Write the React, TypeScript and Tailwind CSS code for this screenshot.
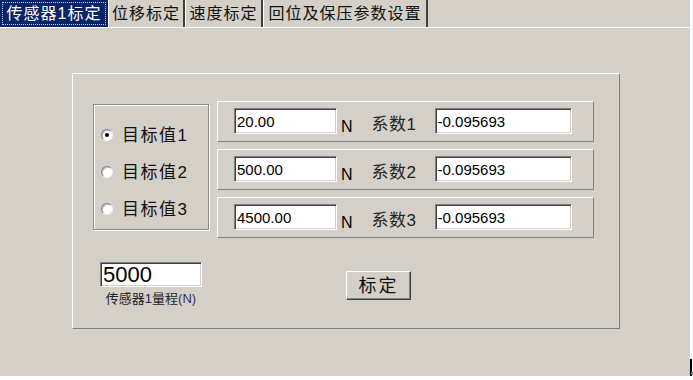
import React from "react";

const cjk = { fontFamily: '"Liberation Sans", "Noto Sans CJK SC", sans-serif' };

function Tab({ label, w, active }: { label: string; w: number; active?: boolean }) {
  if (active) {
    return (
      <div
        className="h-[27px] bg-[#0a246a] flex items-center p-[2px] shrink-0"
        style={{ width: w }}
      >
        <div className="w-full h-full border border-dotted border-[#c8d0e8] flex items-center justify-center text-white text-[16px] tracking-[1px] leading-none">
          {label}
        </div>
      </div>
    );
  }
  return (
    <div
      className="h-[27px] flex items-center justify-center border-l border-l-white border-r-2 border-r-[#404040] text-[16px] tracking-[1px] leading-none text-[#111] shrink-0"
      style={{ width: w }}
    >
      {label}
    </div>
  );
}

function Field({ value, w, h = 26, size = 15 }: { value: string; w: number; h?: number; size?: number }) {
  return (
    <div
      className="bg-white border border-t-[#808080] border-l-[#808080] border-b-white border-r-white shadow-[inset_1px_1px_0_#404040,inset_-1px_-1px_0_#d4d0c8] flex items-center pl-[2px] text-black leading-none shrink-0"
      style={{ width: w, height: h, fontSize: size, fontFamily: '"Liberation Sans", Arial, sans-serif' }}
    >
      {value}
    </div>
  );
}

function Radio({ label, checked }: { label: string; checked?: boolean }) {
  return (
    <div className="flex items-center h-[20px]">
      <div className="w-[12px] h-[12px] rounded-full bg-white border border-t-[#808080] border-l-[#808080] border-b-[#f0f0f0] border-r-[#f0f0f0] shadow-[inset_1px_1px_0_#c0c0c0] flex items-center justify-center">
        {checked && <div className="w-[4px] h-[4px] rounded-full bg-black" />}
      </div>
      <span className="ml-[9px] text-[17px] tracking-[1.5px] leading-none text-[#111]">{label}</span>
    </div>
  );
}

function Row({ val, idx }: { val: string; idx: number }) {
  return (
    <div className="w-[377px] h-[41px] border border-t-white border-l-white border-b-[#808080] border-r-[#808080] flex items-start pl-[16px] pt-[6px]">
      <Field value={val} w={103} />
      <span className="ml-[4px] mt-[11px] text-[16px] leading-none text-black" style={{ fontFamily: '"Liberation Sans", sans-serif' }}>
        N
      </span>
      <span className="ml-[19px] mt-[8px] text-[17px] leading-none text-[#222] tracking-[0.5px]">系数{idx}</span>
      <div className="ml-[18px]">
        <Field value="-0.095693" w={137} />
      </div>
    </div>
  );
}

export default function App() {
  return (
    <div className="w-[693px] h-[380px] bg-white relative overflow-hidden" style={cjk}>
      <div className="w-[690px] h-[376px] bg-[#d4d0c8] flex flex-col">
        <div className="flex h-[27px]">
          <Tab label="传感器1标定" w={108} active />
          <Tab label="位移标定" w={77} />
          <Tab label="速度标定" w={78} />
          <Tab label="回位及保压参数设置" w={165} />
        </div>
        <div className="border-t border-t-white flex-1 pl-[72px] pt-[45px]">
          <div className="w-[548px] h-[256px] border border-t-white border-l-white border-b-[#808080] border-r-[#808080] pl-[20px] pt-[27px] flex flex-col">
            <div className="flex items-start">
              <div className="mt-[3px] w-[116px] h-[126px] border border-[#8c8c8c] shadow-[1px_1px_0_#fff,inset_1px_1px_0_#fff] flex flex-col pl-[7px] pt-[20px] gap-[17px]">
                <Radio label="目标值1" checked />
                <Radio label="目标值2" />
                <Radio label="目标值3" />
              </div>
              <div className="ml-[8px] flex flex-col gap-[7px]">
                <Row val="20.00" idx={1} />
                <Row val="500.00" idx={2} />
                <Row val="4500.00" idx={3} />
              </div>
            </div>
            <div className="flex items-start mt-[24px] ml-[7px]">
              <div className="flex flex-col items-center w-[102px]">
                <Field value="5000" w={102} h={25} size={22} />
                <div className="mt-[4px] text-[13px] leading-[16px] text-[#222] whitespace-nowrap">
                  传感器<span className="text-[#2a2050]">1</span>量程<span className="text-[#303060]">(N)</span>
                </div>
              </div>
              <div className="ml-[144px] mt-[9px] w-[65px] h-[29px] bg-[#d4d0c8] border border-t-white border-l-white border-b-[#404040] border-r-[#404040] shadow-[inset_-1px_-1px_0_#808080] flex items-center justify-center text-[18px] tracking-[2px] leading-none text-[#111]">
                标定
              </div>
            </div>
          </div>
        </div>
      </div>
      <div className="absolute left-[690px] top-[359px] w-[2px] h-[17px] bg-black" />
      <div className="absolute left-[691px] top-[372px] w-[2px] h-[3px] bg-[#808080]" />
    </div>
  );
}
